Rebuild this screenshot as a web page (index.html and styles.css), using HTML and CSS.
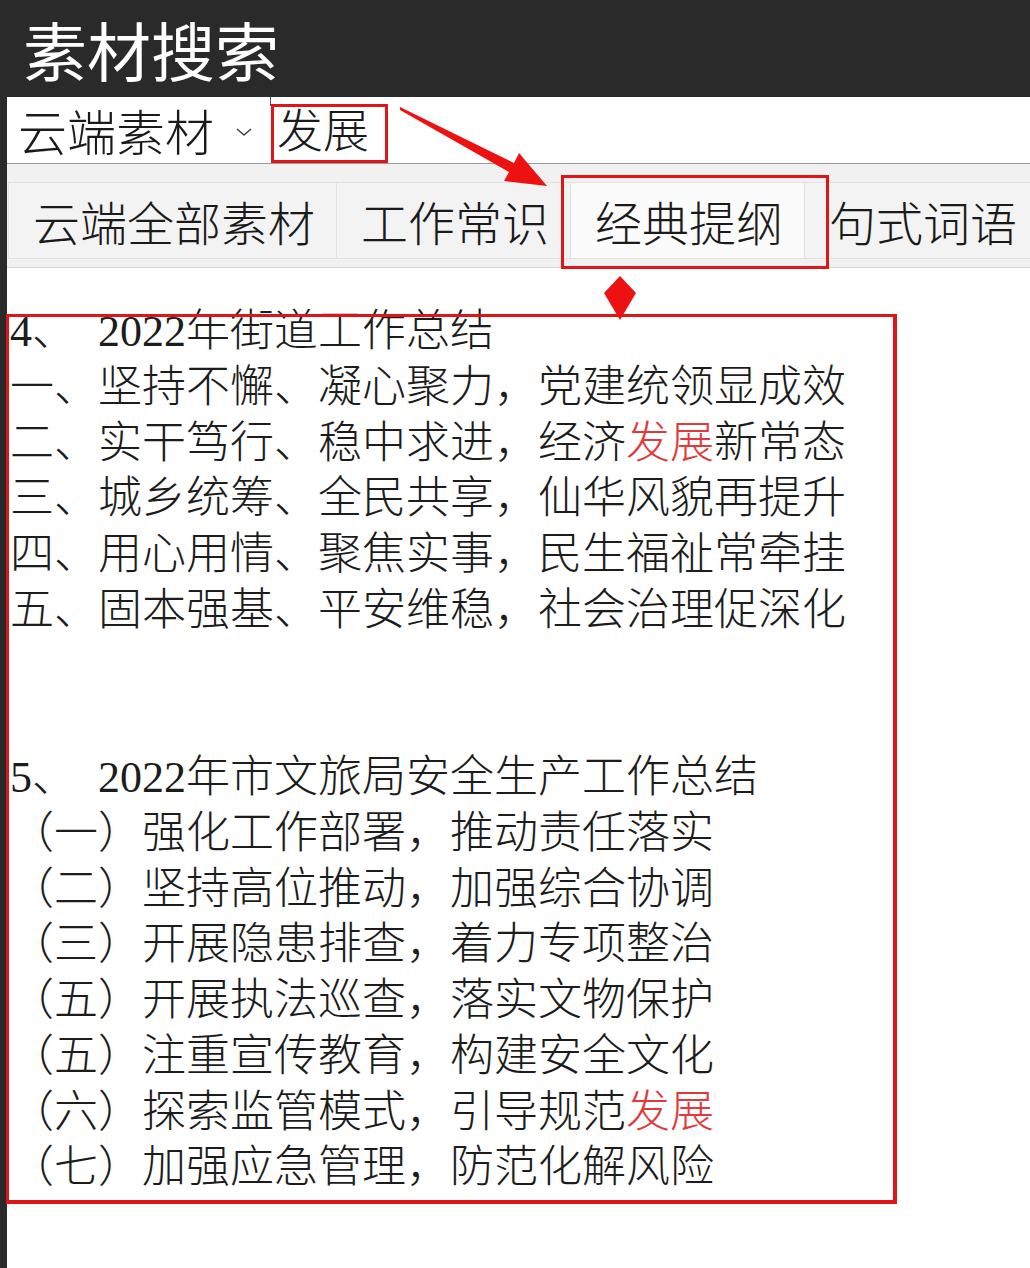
FILE: index.html
```html
<!DOCTYPE html>
<html lang="zh-CN">
<head>
<meta charset="utf-8">
<title>素材搜索</title>
<link rel="stylesheet" href="styles.css">
</head>
<body>
<div class="app">
  <header class="titlebar">素材搜索</header>
  <main class="main">
    <div class="search">
      <div class="source">云端素材<span class="chev"><svg width="20" height="12" viewBox="0 0 20 12"><path d="M3 3 L10 9 L17 3" fill="none" stroke="#444" stroke-width="1.6"/></svg></span></div>
      <div class="query">发展</div>
    </div>
    <nav class="tabs">
      <div class="tab">云端全部素材</div>
      <div class="tab">工作常识</div>
      <div class="tab active">经典提纲</div>
      <div class="tab">句式词语</div>
    </nav>
    <section class="content">
      <div class="line"><span class="num">4、</span>2022年街道工作总结</div>
      <div class="line">一、坚持不懈、凝心聚力，党建统领显成效</div>
      <div class="line">二、实干笃行、稳中求进，经济<span class="hl">发展</span>新常态</div>
      <div class="line">三、城乡统筹、全民共享，仙华风貌再提升</div>
      <div class="line">四、用心用情、聚焦实事，民生福祉常牵挂</div>
      <div class="line">五、固本强基、平安维稳，社会治理促深化</div>
      <div class="line blank"></div>
      <div class="line blank"></div>
      <div class="line"><span class="num">5、</span>2022年市文旅局安全生产工作总结</div>
      <div class="line">（一）强化工作部署，推动责任落实</div>
      <div class="line">（二）坚持高位推动，加强综合协调</div>
      <div class="line">（三）开展隐患排查，着力专项整治</div>
      <div class="line">（五）开展执法巡查，落实文物保护</div>
      <div class="line">（五）注重宣传教育，构建安全文化</div>
      <div class="line">（六）探索监管模式，引导规范<span class="hl">发展</span></div>
      <div class="line">（七）加强应急管理，防范化解风险</div>
    </section>
  </main>

  <div class="mark mark-query"></div>
  <div class="mark mark-tab"></div>
  <div class="mark mark-content"></div>
  <svg class="arrows" width="1030" height="340" viewBox="0 0 1030 340">
    <polygon points="400,107 514,163 519,153 547,186 504,181 509,172 400,110" fill="#ee1111"/>
    <polygon points="620,276 636,293 620,320 604,293" fill="#ee1111"/>
  </svg>
</div>
</body>
</html>
```

FILE: styles.css
```css
* { box-sizing: border-box; }

html, body {
  margin: 0;
  padding: 0;
  background: #ffffff;
}

body {
  font-family: "Liberation Serif", "Noto Sans CJK SC", serif;
  color: #1c1c1c;
}

.app {
  position: relative;
  width: 1030px;
  min-height: 1268px;
  display: flex;
  flex-direction: column;
  overflow: hidden;
}

.titlebar {
  height: 97px;
  background: #2a2a2a;
  color: #ffffff;
  font-family: "Noto Sans CJK SC", sans-serif;
  font-size: 64px;
  line-height: 96px;
  padding-left: 23px;
}

.main {
  flex: 1;
  border-left: 7px solid #2a2a2a;
  display: flex;
  flex-direction: column;
}

.search {
  height: 67px;
  display: flex;
  align-items: center;
  border-bottom: 1px solid #9a9a9a;
  font-family: "Noto Sans CJK SC", sans-serif;
  font-weight: 300;
}

.source {
  font-size: 49px;
  line-height: 66px;
  padding-left: 11px;
  display: flex;
  align-items: center;
  color: #1a1a1a;
}

.chev {
  display: inline-flex;
  margin-left: 20px;
  padding-top: 4px;
}

.query {
  font-size: 46px;
  line-height: 60px;
  align-self: flex-start;
  margin-left: 16px;
  padding-left: 6px;
  border-left: 1px solid #555;
  height: 9px;
  overflow: visible;
  color: #1a1a1a;
}

.tabs {
  height: 104px;
  background: #f1f1f1;
  border-bottom: 1px solid #d6d6d6;
  display: flex;
  align-items: flex-start;
  padding-top: 18px;
  padding-left: 1px;
  font-family: "Noto Sans CJK SC", sans-serif;
  font-weight: 300;
}

.tab {
  height: 77px;
  font-size: 47px;
  line-height: 76px;
  padding: 0 21px 0 24px;
  background: #f3f3f3;
  border: 1px solid #e1e1e1;
  border-left: none;
  color: #1a1a1a;
  white-space: nowrap;
}

.tab:first-child {
  border-left: 1px solid #e1e1e1;
}

.tab.active {
  background: #fbfbfb;
}

.content {
  padding: 36px 0 0 3px;
  font-size: 44px;
  font-weight: 300;
}

.line {
  height: 55.75px;
  line-height: 55.75px;
  white-space: nowrap;
}

.num {
  display: inline-block;
  width: 88px;
}

.hl {
  color: #e23a3a;
}

.mark {
  position: absolute;
  border: 3px solid #e01515;
  pointer-events: none;
}

.mark-query {
  left: 271px;
  top: 104px;
  width: 117px;
  height: 59px;
}

.mark-tab {
  left: 561px;
  top: 175px;
  width: 268px;
  height: 94px;
}

.mark-content {
  left: 6px;
  top: 314px;
  width: 891px;
  height: 890px;
  border-width: 3px 4px 4px 3px;
}

.arrows {
  position: absolute;
  left: 0;
  top: 0;
  pointer-events: none;
}
```
